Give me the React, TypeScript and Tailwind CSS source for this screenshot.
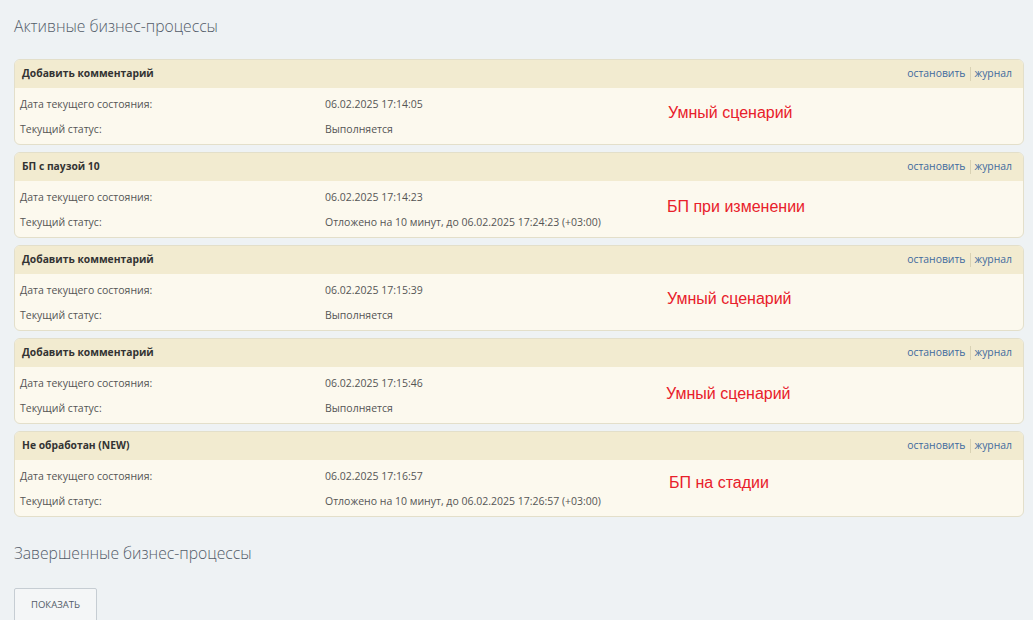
import React from "react";

type Proc = {
  title: string;
  date: string;
  status: string;
  note: string;
  noteClass: string;
};

const procs: Proc[] = [
  {
    title: "Добавить комментарий",
    date: "06.02.2025 17:14:05",
    status: "Выполняется",
    note: "Умный сценарий",
    noteClass: "left-[653px] top-[44px]",
  },
  {
    title: "БП с паузой 10",
    date: "06.02.2025 17:14:23",
    status: "Отложено на 10 минут, до 06.02.2025 17:24:23 (+03:00)",
    note: "БП при изменении",
    noteClass: "left-[652px] top-[45px]",
  },
  {
    title: "Добавить комментарий",
    date: "06.02.2025 17:15:39",
    status: "Выполняется",
    note: "Умный сценарий",
    noteClass: "left-[652px] top-[44px]",
  },
  {
    title: "Добавить комментарий",
    date: "06.02.2025 17:15:46",
    status: "Выполняется",
    note: "Умный сценарий",
    noteClass: "left-[651px] top-[46px]",
  },
  {
    title: "Не обработан (NEW)",
    date: "06.02.2025 17:16:57",
    status: "Отложено на 10 минут, до 06.02.2025 17:26:57 (+03:00)",
    note: "БП на стадии",
    noteClass: "left-[654px] top-[42px]",
  },
];

function ProcCard({ p }: { p: Proc }) {
  return (
    <div className="relative h-[86px] rounded-[6px] border border-[#e3dfca] bg-[#fcf9ee] overflow-hidden">
      <div className="flex h-[28px] items-center justify-between bg-[#f2ebd0] pl-[7px] pr-[11px]">
        <span className="text-[10.3px] font-bold text-[#333]">{p.title}</span>
        <div className="flex items-center text-[10.4px] text-[#3f6a9e]">
          <span>остановить</span>
          <span className="mx-[4px] h-[14px] w-px bg-[#d9d2b4]" />
          <span>журнал</span>
        </div>
      </div>
      <div className="flex flex-col pt-[9px] text-[10.5px] text-[#555]">
        <div className="flex h-[16px] items-center">
          <span className="w-[310px] pl-[5px]">Дата текущего состояния:</span>
          <span>{p.date}</span>
        </div>
        <div className="mt-[9px] flex h-[16px] items-center">
          <span className="w-[310px] pl-[5px]">Текущий статус:</span>
          <span>{p.status}</span>
        </div>
      </div>
      <span
        className={`absolute ${p.noteClass} text-[16px] leading-[18px] text-[#e8202a] [font-family:'Liberation_Sans',Arial,sans-serif]`}
      >
        {p.note}
      </span>
    </div>
  );
}

export default function App() {
  return (
    <main className="min-h-[620px] overflow-hidden bg-[#eef2f4] px-[14px] pr-[9px] [font-family:'Open_Sans',sans-serif]">
      <h2 className="pt-[15px] text-[15.7px] font-light leading-[22px] text-[#535c69]">
        Активные бизнес-процессы
      </h2>
      <div className="mt-[22px] flex flex-col gap-[7px]">
        {procs.map((p, i) => (
          <ProcCard key={i} p={p} />
        ))}
      </div>
      <h2 className="mt-[25px] text-[15.7px] font-light leading-[22px] text-[#535c69]">
        Завершенные бизнес-процессы
      </h2>
      <button className="mt-[24px] h-[34px] w-[83px] rounded-[2px] border border-[#c6cdd3] bg-[#f4f6f7] text-[9.5px] font-medium text-[#535c69]">
        ПОКАЗАТЬ
      </button>
    </main>
  );
}
